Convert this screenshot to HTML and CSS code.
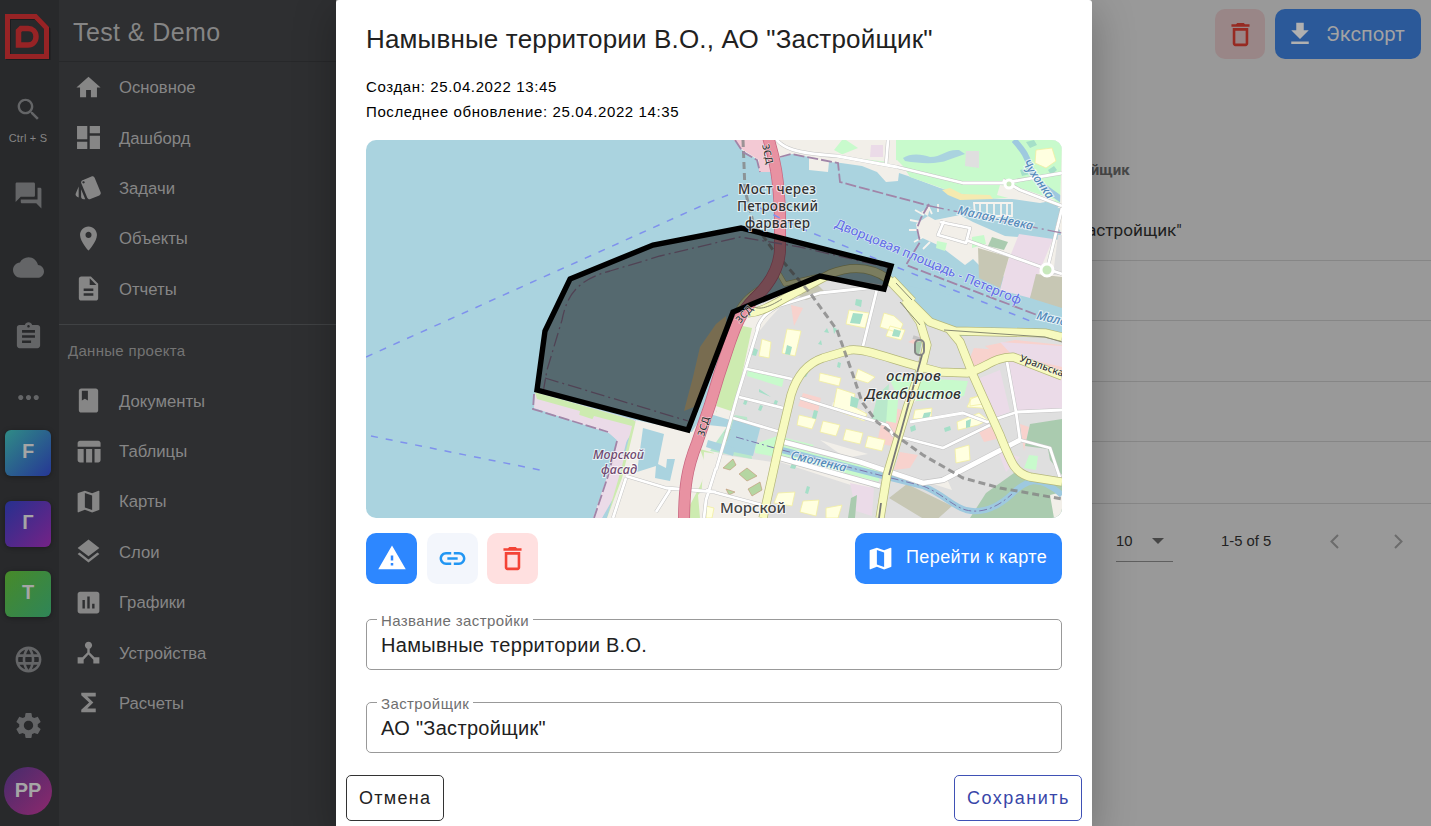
FILE: index.html
```html
<!DOCTYPE html>
<html lang="ru">
<head>
<meta charset="utf-8">
<title>Test &amp; Demo</title>
<link rel="stylesheet" href="styles.css">
</head>
<body>
<div class="app">
  <nav class="rail">
    <div class="cell cell-logo"><svg width="46" height="46" viewBox="0 0 46 46"><path class="logo-shadow" d="M3.500 3.500H31L43 15.500V43.500H3.500Z"/><path class="logo-frame" d="M2.500 2.500H30.500L41.500 14V42.500H2.500Z"/><path class="logo-d" d="M16 14.500H23C27.500 14.500 31 17.500 31 22.500S27.500 31 23 31H13.500V17Z"/></svg></div>
    <div class="cell cell-search"><svg class="ic31" viewBox="0 0 24 24"><path d="M15.500 14h-.79l-.28-.27C15.410 12.590 16 11.110 16 9.500 16 5.910 13.090 3 9.500 3S3 5.910 3 9.500 5.910 16 9.500 16c1.610 0 3.090-.59 4.230-1.570l.27.28v.79l5 4.990L20.490 19l-4.990-5zm-6 0C7.010 14 5 11.990 5 9.500S7.010 5 9.500 5 14 7.010 14 9.500 11.990 14 9.500 14z"/></svg><span class="hint">Ctrl + S</span></div>
    <div class="cell cell-chat"><svg class="ic31" viewBox="0 0 24 24"><path d="M21 6h-2v9H6v2c0 .55.45 1 1 1h11l4 4V7c0-.55-.45-1-1-1zm-4 6V3c0-.55-.45-1-1-1H3c-.55 0-1 .45-1 1v14l4-4h10c.55 0 1-.45 1-1z"/></svg></div>
    <div class="cell cell-cloud"><svg class="ic31" viewBox="0 0 24 24"><path d="M19.350 10.040C18.670 6.590 15.640 4 12 4 9.110 4 6.600 5.640 5.350 8.040 2.340 8.360 0 10.910 0 14c0 3.310 2.690 6 6 6h13c2.760 0 5-2.240 5-5 0-2.640-2.050-4.780-4.650-4.960z"/></svg></div>
    <div class="cell cell-clip"><svg class="ic31" viewBox="0 0 24 24"><path d="M19 3h-4.180C14.400 1.840 13.300 1 12 1c-1.300 0-2.400.84-2.820 2H5c-1.100 0-2 .9-2 2v14c0 1.100.9 2 2 2h14c1.100 0 2-.9 2-2V5c0-1.100-.9-2-2-2zm-7 0c.55 0 1 .45 1 1s-.45 1-1 1-1-.45-1-1 .45-1 1-1zm2 14H7v-2h7v2zm3-4H7v-2h10v2zm0-4H7V7h10v2z"/></svg></div>
    <div class="cell cell-dots"><svg class="ic31" viewBox="0 0 24 24"><path d="M6 10c-1.100 0-2 .9-2 2s.9 2 2 2 2-.9 2-2-.9-2-2-2zm12 0c-1.100 0-2 .9-2 2s.9 2 2 2 2-.9 2-2-.9-2-2-2zm-6 0c-1.100 0-2 .9-2 2s.9 2 2 2 2-.9 2-2-.9-2-2-2z"/></svg></div>
    <div class="cell cell-f"><span class="tile tile-f">F</span></div>
    <div class="cell cell-g"><span class="tile tile-g">Г</span></div>
    <div class="cell cell-t"><span class="tile tile-t">T</span></div>
    <div class="cell cell-globe"><svg class="ic31" viewBox="0 0 24 24"><path d="M11.990 2C6.470 2 2 6.480 2 12s4.470 10 9.990 10C17.520 22 22 17.520 22 12S17.520 2 11.990 2zm6.930 6h-2.950c-.32-1.250-.78-2.450-1.380-3.560 1.840.63 3.370 1.910 4.330 3.560zM12 4.040c.83 1.200 1.480 2.530 1.910 3.960h-3.820c.43-1.430 1.080-2.760 1.910-3.960zM4.260 14C4.100 13.360 4 12.690 4 12s.1-1.360.26-2h3.380c-.08.66-.14 1.320-.14 2 0 .68.06 1.340.14 2H4.260zm.82 2h2.950c.32 1.250.78 2.450 1.380 3.560-1.840-.63-3.370-1.900-4.330-3.560zm2.950-8H5.080c.96-1.660 2.490-2.930 4.330-3.560C8.810 5.550 8.350 6.750 8.030 8zM12 19.960c-.83-1.200-1.480-2.530-1.910-3.960h3.820c-.43 1.430-1.080 2.760-1.910 3.960zM14.340 14H9.660c-.09-.66-.16-1.320-.16-2 0-.68.07-1.350.16-2h4.680c.09.65.16 1.320.16 2 0 .68-.07 1.340-.16 2zm.25 5.560c.6-1.110 1.060-2.310 1.380-3.560h2.950c-.96 1.650-2.490 2.930-4.330 3.560zM16.360 14c.08-.66.14-1.320.14-2 0-.68-.06-1.340-.14-2h3.380c.16.64.26 1.310.26 2s-.1 1.360-.26 2h-3.380z"/></svg></div>
    <div class="cell cell-gear"><svg class="ic31" viewBox="0 0 24 24"><path d="M19.140 12.940c.04-.3.06-.61.06-.94 0-.32-.02-.64-.07-.94l2.030-1.580c.18-.14.23-.41.12-.61l-1.920-3.320c-.12-.22-.37-.29-.59-.22l-2.390.96c-.5-.38-1.030-.7-1.620-.94l-.36-2.540c-.04-.24-.24-.41-.48-.41h-3.840c-.24 0-.43.17-.47.41l-.36 2.540c-.59.24-1.130.57-1.620.94l-2.390-.96c-.22-.08-.47 0-.59.22L2.740 8.870c-.12.21-.08.47.12.61l2.030 1.580c-.05.3-.09.63-.09.94s.02.64.07.94l-2.030 1.580c-.18.14-.23.41-.12.61l1.920 3.320c.12.22.37.29.59.22l2.390-.96c.5.38 1.030.7 1.620.94l.36 2.540c.05.24.24.41.48.41h3.840c.24 0 .44-.17.47-.41l.36-2.540c.59-.24 1.130-.56 1.620-.94l2.390.96c.22.08.47 0 .59-.22l1.920-3.320c.12-.22.07-.47-.12-.61l-2.010-1.580zM12 15.600c-1.980 0-3.600-1.620-3.600-3.600s1.620-3.600 3.600-3.600 3.600 1.620 3.600 3.600-1.620 3.600-3.600 3.600z"/></svg></div>
    <div class="cell cell-avatar"><span class="avatar">PP</span></div>
  </nav>

  <aside class="side">
    <h1 class="side-title">Test &amp; Demo</h1>
    <ul class="menu">
      <li><svg viewBox="0 0 24 24"><path d="M10 20v-6h4v6h5v-8h3L12 3 2 12h3v8z"/></svg><span>Основное</span></li>
      <li><svg viewBox="0 0 24 24"><path d="M2.500 13.500h8.500v-11H2.500v11zm0 8h8.500v-6H2.500v6zm10.500 0h8.500v-11H13v11zm0-19v6h8.500v-6H13z"/></svg><span>Дашборд</span></li>
      <li><svg viewBox="0 0 24 24"><path d="M2.530 19.650l1.340.56v-9.030l-2.430 5.860c-.41 1.020.08 2.190 1.090 2.610zm19.500-3.700L17.070 3.980c-.31-.75-1.040-1.210-1.810-1.230-.26 0-.53.04-.79.15L7.100 5.950c-.75.31-1.210 1.030-1.230 1.800-.01.27.04.54.15.8l4.960 11.970c.31.76 1.050 1.220 1.830 1.230.26 0 .52-.05.77-.15l7.360-3.050c1.020-.42 1.510-1.590 1.090-2.600zM7.880 8.750c-.55 0-1-.45-1-1s.45-1 1-1 1 .45 1 1-.45 1-1 1zm-2 11c0 1.100.9 2 2 2h1.450l-3.450-8.340v6.340z"/></svg><span>Задачи</span></li>
      <li><svg viewBox="0 0 24 24"><path d="M12 2C8.130 2 5 5.130 5 9c0 5.250 7 13 7 13s7-7.750 7-13c0-3.870-3.130-7-7-7zm0 9.500c-1.380 0-2.500-1.120-2.500-2.500s1.120-2.500 2.500-2.500 2.500 1.120 2.500 2.500-1.120 2.500-2.500 2.500z"/></svg><span>Объекты</span></li>
      <li><svg viewBox="0 0 24 24"><path d="M14 2H6c-1.100 0-2 .9-2 2v16c0 1.100.9 2 2 2h12c1.100 0 2-.9 2-2V8l-6-6zm2 16H8v-2h8v2zm0-4H8v-2h8v2zm-3-5V3.500L18.500 9H13z"/></svg><span>Отчеты</span></li>
    </ul>
    <div class="group">Данные проекта</div>
    <ul class="menu">
      <li><svg viewBox="0 0 24 24"><path d="M18 2H6c-1.100 0-2 .9-2 2v16c0 1.100.9 2 2 2h12c1.100 0 2-.9 2-2V4c0-1.100-.9-2-2-2zM6.500 4h5v8l-2.500-1.500L6.500 12V4z"/></svg><span>Документы</span></li>
      <li><svg viewBox="0 0 24 24"><path d="M10 10.020h5V21h-5V10.020zM17 21h3c1.100 0 2-.9 2-2v-9h-5v11zm3-18H5c-1.100 0-2 .9-2 2v3h19V5c0-1.100-.9-2-2-2zM3 19c0 1.100.9 2 2 2h3V10H3v9z"/></svg><span>Таблицы</span></li>
      <li><svg viewBox="0 0 24 24"><path d="M20.500 3l-.16.03L15 5.100 9 3 3.360 4.900c-.21.07-.36.25-.36.48V20.500c0 .28.22.5.5.5l.16-.03L9 18.900l6 2.100 5.640-1.900c.21-.07.36-.25.36-.48V3.500c0-.28-.22-.5-.5-.5zM15 19l-6-2.110V5l6 2.110V19z"/></svg><span>Карты</span></li>
      <li><svg viewBox="0 0 24 24"><path d="M11.990 18.540l-7.370-5.730L3 14.070l9 7 9-7-1.630-1.270-7.380 5.740zM12 16l7.360-5.730L21 9l-9-7-9 7 1.630 1.270L12 16z"/></svg><span>Слои</span></li>
      <li><svg viewBox="0 0 24 24"><path d="M19 3H5c-1.100 0-2 .9-2 2v14c0 1.100.9 2 2 2h14c1.100 0 2-.9 2-2V5c0-1.100-.9-2-2-2zM9 17H7v-7h2v7zm4 0h-2V7h2v10zm4 0h-2v-4h2v4z"/></svg><span>Графики</span></li>
      <li><svg viewBox="0 0 24 24"><path d="M17 16l-4-4V8.820C14.160 8.400 15 7.300 15 6c0-1.660-1.340-3-3-3S9 4.340 9 6c0 1.300.84 2.400 2 2.820V12l-4 4H3v5h5v-3.050l4-4.200 4 4.200V21h5v-5h-4z"/></svg><span>Устройства</span></li>
      <li><svg viewBox="0 0 24 24"><path d="M18 4H6v2l6.500 6L6 18v2h12v-3h-7l5-5-5-5h7z"/></svg><span>Расчеты</span></li>
    </ul>
  </aside>

  <main class="main">
    <div class="toolbar">
      <button class="btn-del dim"><svg viewBox="0 0 24 24"><path d="M6 19c0 1.100.9 2 2 2h8c1.100 0 2-.9 2-2V7H6v12zM8 9h8v10H8V9zm7.500-5l-1-1h-5l-1 1H5v2h14V4z"/></svg></button>
      <button class="btn-export"><svg viewBox="0 0 24 24"><path d="M19 9h-4V3H9v6H5l7 7 7-7zM5 18v2h14v-2H5z"/></svg><span>Экспорт</span></button>
    </div>
    <div class="table">
      <div class="thead"><span>Застройщик</span></div>
      <div class="trow first"><span>АО "Застройщик"</span></div>
      <div class="trow"></div><div class="trow"></div><div class="trow"></div><div class="trow last"></div>
    </div>
    <div class="pager">
      <div class="select"><span>10</span><svg viewBox="0 0 12 6"><path d="M0 0h12L6 6z"/></svg></div>
      <span class="range">1-5 of 5</span>
      <svg class="chev" viewBox="0 0 9 15"><path d="M8 1L1.500 7.500 8 14"/></svg>
      <svg class="chev" viewBox="0 0 9 15"><path d="M1 1l6.500 6.500L1 14"/></svg>
    </div>
  </main>

  <section class="dialog">
    <h2 class="title">Намывные территории В.О., АО "Застройщик"</h2>
    <p class="meta meta-a">Создан: 25.04.2022 13:45</p>
    <p class="meta meta-b">Последнее обновление: 25.04.2022 14:35</p>

    <svg class="map" viewBox="366 140 696 378">
      <rect class="water" x="366" y="140" width="696" height="378"/>
      <!-- northern shore -->
      <path class="land" d="M734 140H1062V207L1045 201 1020 199 1000 199 975 197 940 188 908 176 899 173 898 181 886 182 877 172 862 166 841 163 829 162 828 172 809 170 809 157 792 154 780 158 776 172 760 172 758 160 742 150Z"/>
      <path class="pink" d="M734 140H774L778 156 776 172H759V160L743 150Z"/>
      <path class="park" d="M842 140H1062V207L1030 197 985 199 950 191 910 177 903 166 897 160 886 163 845 156 834 150Z"/>
      <path class="land" d="M846 140H896V163L838 156 858 148Z"/>
      <path class="lav" d="M871 145H883V157H870Z"/>
      <path class="sand" d="M942 190L950 188 962 194 990 195 993 199 960 200 948 195Z"/>
      <path class="land" d="M1000 185L1020 188 1056 200 1040 203 1012 199 997 195Z"/>
      <path class="grey" d="M966 151H979V168L965 166Z"/>
      <path class="water" d="M903 158C910 153 922 154 930 157 942 157 946 149 959 150L965 154 948 160C939 164 922 164 905 161Z"/>
      <path class="yel" d="M1036 150L1052 148 1056 161 1046 168 1035 163Z"/>
      <path class="mint2" d="M1048 170l6-4 3 4-6 5zM1020 170l8-2 2 6-8 2zM1026 142l8-2 3 5-7 3z"/>
      <path class="river" d="M1014 140C1023 150 1028 157 1031 170L1040 184 1062 200"/>
      <!-- marina island -->
      <path class="land" d="M921 212L930 207 928 216 916 224 918 236 940 246 965 265 973 259 980 266 1000 275 1030 288 1062 298V140L1060 205 1046 222 1060 230 1062 240 1005 236 973 222 960 215 935 220Z"/>
      <path class="water" d="M1020 209L1061 208 1053 236 1010 232 975 220 972 210Z"/>
      <path class="pier" d="M974 203H1012V216H975ZM980 203V214M987 203V214M994 203V215M1001 203V216M1007 203V215M924 215l-9-5M920 222l-10-2M919 230h-10M923 237l-9 5M930 242l-7 7M932 214l-4-8M938 212v-8"/>
      <path class="lav" d="M1019 234L1053 239 1040 270 1030 298 1000 290 1007 264Z"/>
      <path class="brown" d="M978 248L1009 257 1000 288 979 278Z"/>
      <path class="brown" d="M1036 274L1062 277V308L1030 298Z"/>
      <path class="park" d="M972 237l12-2 2 9-14 4zM937 241l10 2-2 8-9-3z"/>
      <path class="wood" d="M992 237l16 5-4 8-16-4z"/>
      <path class="grey" d="M1058 235h4v40h-9z"/>
      <!-- reclaimed strip and harbour -->
      <path class="lav" d="M535 392L635 420 638 423 621 450 629 471 602 518H593L609 471 617 440 609 433 534 408Z"/>
      <path class="pgreen" d="M535 392L633 420 639 424 628 470 612 518H607L621 470 632 426 594 416 592 420 579 416 580 411 537 399Z"/>
      <path class="lav" d="M540 402L592 419 630 427 620 468 602 518H594L609 471 617 440 609 433 536 408Z"/>
      <path class="land" d="M636 420L692 432 714 397 722 372 737 318 757 322V518H607L622 478Z"/>
      <path class="water" d="M643 428L664 434 658 464 666 468 667 459 675 459 670 481 655 478 656 466 637 472Z"/>
      <path class="pgreen" d="M700 449L714 453 700 486 690 505 690 518H700L698 495 711 480ZM741 322L758 322 735 418 716 412Z"/>
      <!-- main island -->
      <path class="grey" d="M733 316L820 276 885 285 905 292 925 325 960 331 1062 336V518H700L713 478 727 430 740 360Z"/>
      <path class="land" d="M733 318L800 286 770 318 752 340 737 400 730 430 723 440 715 405ZM770 448L862 470 877 485 866 490 780 462ZM704 452L730 456 772 462 760 518H700Z"/>
      <path class="pgreen" d="M752 328L734 412 716 406 738 325Z"/>
      <path class="water" d="M1062 336H960L925 322 910 300 900 284 1062 320Z"/>
      <path class="pk" d="M974 348L1000 350 998 355 975 370 968 362ZM1015 340L1062 345V375L1000 357 985 346Z"/>
      <path class="lav" d="M1007 358L1062 373V410L1017 410ZM1000 342L1062 346 1062 367 1012 355ZM975 380L1000 370 1010 412 990 419ZM998 451L1020 457 1006 472Z"/>
      <path class="pk" d="M885 406l18 4-7 37-19-4zM917 345l5-10-14 7zM803 393l18 5-3 14-20-6zM978 430l17-4 6 12-17 4zM900 452l18 3-8 13-16 2zM1020 424l9 3-5 24zM791 305l12 3-9 18z"/>
      <path class="park" d="M888 376L968 381 964 396 908 402 896 393ZM748 368l36 10-2 9-35-11zM782 437l32 8-8 7-28-8zM755 444l22-8-1 21-21-4zM888 394l11-5-3 34-20-4zM1029 455l9 1-2 14-12-2z"/>
      <path class="mint" d="M878 394l11-10-3 40-15-3zM735 415l12 2 5 42-42-8z"/>
      <path class="wood" d="M970 518L986 493 1014 473 1035 481 1062 483V518ZM1025 446L1030 424 1062 419V475L1050 460 1048 449Z"/>
      <path class="brown" d="M889 498l18-14 45 22-20 18zM794 293l22-10 10 10-20 7z"/>
      <path class="land" d="M820 440l48 14-22 4zM900 393l18 5-10 12zM833 402l32 9-2 7-32-9zM930 483l17-4 5 11zM1050 495l12-3v26h-8z"/>
      <path class="lav" d="M850 483l24 5-2 28-16-5z"/>
      <path class="scrub" d="M723 468l10-9 3 6-6 5zM739 474l8-6 10 8-10 5zM748 489l12-7 2 8-10 6zM726 489l9 3-6 3zM725 432l9-4 2 10-9 3z"/>
      <!-- buildings -->
      <path class="yel" d="M787 329l14 2-6 25-13-3zM762 339l9 3-2 16-10-2zM849 310l20 3-4 15-19-4zM884 313l10 3 9 8-4 9-19-6zM890 326l15 4-4 10-15-4zM820 373l21 5-2 8-20-5zM858 369l17 8-7 6-13-4zM837 388l18 6-3 12 15 8-3 7-31-12zM799 415l17 4-4 10-15-4zM823 421l17 4-4 11-16-4zM846 429l17 4-3 11-17-4zM868 436l17 4-3 11-17-4zM915 410l17-2-1 10-18 1zM971 399l13-6 3 10 7 9-13-4-14-1zM970 398l11-2 2 8-13 2zM957 422l22-9 9 7-10 5-20 5zM955 449l14-4 1 15-14 3zM778 493l17-1-3 14-18-3zM803 501l16-1-3 16-16-4zM826 508l16-3-4 13h-12zM706 506l8 2-2 10h-6z"/>
      <path class="mint2" d="M787 345l5 2-2 8-5-1zM853 313l10 1-3 10-10-1zM856 299l6 1-1 7-6-2zM894 329l7 2-2 6-7-1zM851 396l8 3-2 9-7-2zM814 410l4 1-2 8-4-1zM924 413l7-1-2 6-7 1zM966 421l5-2-1 8-4 1zM807 486l3 1-2 7-3-1zM759 389l12 8-12-5zM833 327l4 2-3 5zM754 348l4 2-2 6-4-1zM792 463l5 1-2 5-5-1zM745 399l3 1-2 5-3-1zM760 405l3 1-2 5-3-1zM824 332l3-4 2 5zM869 467l3-1-1 5zM804 372l4 1-2 4-4-1zM818 344l3-4 1 5zM910 427l5-2 1 5-5 2zM944 428l6-2 1 4-6 2zM838 362l3 1-1 5-3-1zM775 400l3 1-2 5-3-1z"/>
      <path class="wood" d="M851 498l6-3-2 23h-7zM916 342l6-1-3 14-5-2z"/>
      <!-- Smolenka -->
      <path class="water" d="M734 418L761 425 753 456 724 450Z"/>
      <path class="water" d="M710 414l20 6-3 7-19-2zM708 440l27 8-2 8-27-9z"/>
      <path class="river-g" d="M780 451L880 476"/>
      <path class="river" d="M778 449L883 476 923 486C945 495 950 505 966 510 982 514 998 507 1012 494 1025 481 1038 473 1062 495"/>
      <path class="river-dash" d="M736 437L778 449 883 476 923 486C945 495 950 505 966 510 982 514 998 507 1012 494"/>
      <!-- white streets -->
      <g class="case">
        <path d="M775 138C783 148 793 153 837 156L897 167 963 183 1003 183 1062 173M1003 180L1020 190 1062 206M1062 208L1047 270M888 140L886 165M940 222L970 228 966 243 938 235 944 221M966 240L1044 268 1062 274"/>
        <path d="M757 329C760 318 768 312 778 306L820 293 877 287M877 289L863 346M759 325L737 397 730 422 716 470M739 397L783 408M747 369L792 379M800 398L887 425 893 435 943 448 990 425M910 422L963 413 987 422 1017 412 1062 410M1007 362L1016 412 1020 440"/>
        <path class="wide" d="M784 442L860 462 923 483 943 480 1020 440M780 458L880 486"/>
        <path d="M1020 440L1050 448 1060 478M706 490L762 505M733 418L780 432M626 476L666 488 716 492M626 478L613 518M670 490L656 512M716 468L706 500 704 518"/>
        <path d="M913 337L925 341 925 350"/>
      </g>
      <g class="street">
        <path d="M775 138C783 148 793 153 837 156L897 167 963 183 1003 183 1062 173M1003 180L1020 190 1062 206M1062 208L1047 270M888 140L886 165M940 222L970 228 966 243 938 235 944 221M966 240L1044 268 1062 274"/>
        <path d="M757 329C760 318 768 312 778 306L820 293 877 287M877 289L863 346M759 325L737 397 730 422 716 470M739 397L783 408M747 369L792 379M800 398L887 425 893 435 943 448 990 425M910 422L963 413 987 422 1017 412 1062 410M1007 362L1016 412 1020 440"/>
        <path class="wide" d="M784 442L860 462 923 483 943 480 1020 440M780 458L880 486"/>
        <path d="M1020 440L1050 448 1060 478M706 490L762 505M733 418L780 432M626 476L666 488 716 492M626 478L613 518M670 490L656 512M716 468L706 500 704 518"/>
      </g>
      <circle class="round" cx="1047" cy="270" r="6"/><circle class="round" cx="1009" cy="184" r="4"/>
      <!-- main roads -->
      <g class="ycase">
        <path d="M763 518L778 450 791 395C797 375 808 363 823 358L850 350C862 348 885 357 917 366L940 372 967 373C985 369 993 357 1013 357L1062 376"/>
        <path d="M905 300L920 322 927 345 923 362 907 408 887 475 880 518M950 330L960 342 973 375 1000 435C1012 465 1015 473 1030 477L1062 482"/>
        <path d="M748 313C765 312 780 300 800 290L830 274C850 266 870 266 888 279L908 300 930 322 955 331 1045 333 1062 337"/>
        <path class="thin" d="M737 312C746 290 770 287 778 272L785 284 820 276M893 278L914 300"/>
      </g>
      <g class="yroad">
        <path d="M763 518L778 450 791 395C797 375 808 363 823 358L850 350C862 348 885 357 917 366L940 372 967 373C985 369 993 357 1013 357L1062 376"/>
        <path d="M905 300L920 322 927 345 923 362 907 408 887 475 880 518M950 330L960 342 973 375 1000 435C1012 465 1015 473 1030 477L1062 482"/>
        <path d="M748 313C765 312 780 300 800 290L830 274C850 266 870 266 888 279L908 300 930 322 955 331 1045 333 1062 337"/>
        <path class="thin" d="M737 312C746 290 770 287 778 272L785 284 820 276M893 278L914 300"/>
      </g>
      <path class="lane" d="M900 302L920 325M896 283L912 300M944 330L1045 337 1062 342M752 305C757 311 768 308 782 299"/>
      <rect class="tramloop" x="915" y="340" width="9" height="15" rx="4"/>
      <path class="tram" d="M922 355L889 475M881 503L879 518"/>
      <path class="rail-line" d="M743 140L745 190 753 222 773 250 810 293 837 330 853 375 862 402 877 422 923 455 963 478 1000 488 1062 499"/>
      <!-- sand bar and motorway -->
      <path class="dune" d="M716 324L726 316 727 332 699 405 684 411 693 377 700 347Z"/>
      <path class="zcase" d="M767 134C775 158 779 180 780 215V250C779 270 768 286 754 299 739 314 735 328 729 345L719 375 710 405 697 443C687 468 684 487 684 524"/>
      <path class="zsd" d="M767 134C775 158 779 180 780 215V250C779 270 768 286 754 299 739 314 735 328 729 345L719 375 710 405 697 443C687 468 684 487 684 524"/>
      <path class="border" d="M534 394L533 409 608 432M617 441L608 476 594 518M735 140L743 152 757 160 760 172M780 157L791 154 838 163 840 182 930 206M929 204L921 218 917 228 920 242 906 265 1037 315"/>
      <path class="border2" d="M930 206L1062 233"/>
      <path class="border3" d="M543 393L547 370 562 320C567 295 577 280 610 271L660 256 740 237 800 247 890 268M545 378L688 421"/>
      <path class="ferry" d="M366 357L710 202 728 195M371 436L540 470M760 208L800 228 1035 323"/>
      <path class="plot" d="M570 279L653 245 741 228 891 266 884 289 820 276 733 312 688 430 537 390 545 331Z"/>
      <g class="lbl">
        <text x="738" y="194" textLength="78">Мост через</text>
        <text x="737" y="211" textLength="81">Петровский</text>
        <text x="745" y="228" textLength="65">фарватер</text>
        <text class="it" x="886" y="381" textLength="55">остров</text>
        <text class="it" x="865" y="399" textLength="96">Декабристов</text>
        <text class="town" x="720" y="513" textLength="66">Морской</text>
        <text class="purple" x="593" y="459" textLength="51">Морской</text>
        <text class="purple" x="601" y="474" textLength="36">фасад</text>
        <text class="wtr" transform="translate(957 214) rotate(12)" textLength="77">Малая-Невка</text>
        <text class="wtr" transform="translate(1036 319) rotate(13)">Мало</text>
        <text class="wtr" transform="translate(790 459) rotate(13)" textLength="57">Смоленка</text>
        <text class="wtr" transform="translate(1022 163) rotate(55)" textLength="45">Чухонка</text>
        <text class="fer" transform="translate(834 227) rotate(22.800)" textLength="201">Дворцовая площадь - Петергоф</text>
        <text class="road" transform="translate(1019 361) rotate(20)" textLength="46">Уральска</text>
        <text class="road" transform="translate(762 145) rotate(77)" textLength="20">ЗСД</text>
        <text class="road" transform="translate(740 324) rotate(-48)" textLength="20">ЗСД</text>
        <text class="road" transform="translate(704 437) rotate(-74)" textLength="20">ЗСД</text>
      </g>
    </svg>

    <div class="actions">
      <button class="btn-warn"><svg viewBox="0 0 24 24"><path d="M1 21h22L12 2 1 21zm12-3h-2v-2h2v2zm0-4h-2v-4h2v4z"/></svg></button>
      <button class="btn-link"><svg viewBox="0 0 24 24"><path d="M3.900 12c0-1.710 1.390-3.100 3.100-3.100h4V7H7c-2.760 0-5 2.240-5 5s2.240 5 5 5h4v-1.900H7c-1.710 0-3.100-1.390-3.100-3.100zM8 13h8v-2H8v2zm9-6h-4v1.900h4c1.710 0 3.100 1.390 3.100 3.100s-1.390 3.100-3.100 3.100h-4V17h4c2.760 0 5-2.240 5-5s-2.240-5-5-5z"/></svg></button>
      <button class="btn-del"><svg viewBox="0 0 24 24"><path d="M6 19c0 1.100.9 2 2 2h8c1.100 0 2-.9 2-2V7H6v12zM8 9h8v10H8V9zm7.500-5l-1-1h-5l-1 1H5v2h14V4z"/></svg></button>
      <button class="btn-map"><svg viewBox="0 0 24 24"><path d="M20.500 3l-.16.03L15 5.100 9 3 3.360 4.900c-.21.07-.36.25-.36.48V20.500c0 .28.22.5.5.5l.16-.03L9 18.900l6 2.100 5.640-1.900c.21-.07.36-.25.36-.48V3.500c0-.28-.22-.5-.5-.5zM15 19l-6-2.110V5l6 2.110V19z"/></svg><span>Перейти к карте</span></button>
    </div>

    <fieldset class="field"><legend>Название застройки</legend><span>Намывные территории В.О.</span></fieldset>
    <fieldset class="field second"><legend>Застройщик</legend><span>АО "Застройщик"</span></fieldset>

    <footer class="foot">
      <button class="btn-out">Отмена</button>
      <button class="btn-out save">Сохранить</button>
    </footer>
  </section>
</div>
</body>
</html>
```
FILE: styles.css
```css
* { box-sizing: border-box; }
body { margin: 0; font-family: "Liberation Sans", Arial, sans-serif; background: #999; overflow: hidden; }
button { border: 0; padding: 0; margin: 0; font: inherit; background: none; display: flex; align-items: center; }
.app { position: relative; display: flex; width: 1431px; height: 826px; overflow: hidden; }

.rail { width: 59px; flex: none; background: #28292b; padding-right: 3px; display: flex; flex-direction: column; }
.cell { display: flex; align-items: center; justify-content: center; flex: none; }
.ic31 { width: 31px; height: 31px; fill: #646567; }
.cell-logo { height: 73px; }
.logo-frame { fill: none; stroke: #972325; stroke-width: 5; }
.logo-shadow { fill: none; stroke: #1c1c1e; stroke-width: 5; }
.logo-d { fill: none; stroke: #972325; stroke-width: 5.500; }
.cell-search { height: 57px; margin-top: 20px; flex-direction: column; justify-content: flex-start; padding-top: 2px; }
.hint { font-size: 11px; line-height: 24px; color: #868686; white-space: nowrap; letter-spacing: .2px; margin-top: 2px; }
.cell-chat { height: 90px; }
.cell-cloud { height: 54px; }
.cell-clip { height: 84px; }
.cell-dots { height: 38px; }
.cell-f { height: 73px; }
.cell-g { height: 69px; }
.cell-t { height: 72px; }
.cell-globe { height: 58px; }
.cell-gear { height: 74px; }
.cell-avatar { height: 57px; }
.tile { width: 46px; height: 46px; border-radius: 6px; display: flex; align-items: center; justify-content: center; padding-bottom: 3px; font-weight: 700; font-size: 20px; color: #a5a5a5; box-shadow: 0 1px 5px rgba(0,0,0,.35); }
.tile-f { background: linear-gradient(135deg, #2f8b86, #263795); }
.tile-g { background: linear-gradient(135deg, #26308f, #752286); }
.tile-t { background: linear-gradient(135deg, #478a29, #2f8558); }
.avatar { width: 48px; height: 48px; border-radius: 50%; background: linear-gradient(135deg, #452c6c, #8d286d); display: flex; align-items: center; justify-content: center; font-weight: 700; font-size: 20px; color: #a5a5a5; }

.side { width: 277px; flex: none; background: #2e2f31; }
.side-title { margin: 0; height: 62px; padding: 3px 0 0 14px; line-height: 58px; font-size: 25px; font-weight: 400; color: #858585; letter-spacing: .4px; border-bottom: 1px solid #27282a; }
.menu { list-style: none; margin: 0; padding: 0 0 0 15px; }
.menu li { height: 50.400px; display: flex; align-items: center; gap: 16px; color: #868686; font-size: 16.700px; }
.menu span { padding-top: 2px; }
.menu svg { width: 29px; height: 29px; fill: #868686; flex: none; }
.group { height: 51.500px; margin-top: 10px; border-top: 1px solid #404244; padding: 0 0 0 9px; line-height: 52px; font-size: 15px; color: #747474; letter-spacing: .3px; }

.main { flex: 1; min-width: 0; background: #999; display: flex; flex-direction: column; }
.toolbar { display: flex; justify-content: flex-end; gap: 10px; padding: 9px 10px 0 0; }
.btn-del { width: 51px; height: 51px; border-radius: 10px; background: #ffe0e0; justify-content: center; }
.btn-del svg { width: 31px; height: 31px; fill: #f44336; }
.btn-del.dim { width: 50px; height: 50px; background: #998687; }
.btn-del.dim svg { fill: #972a22; }
.btn-export { width: 146px; height: 50px; border-radius: 10px; background: #2b5999; color: #a3a3a3; padding-left: 10px; gap: 11px; font-family: Roboto, sans-serif; font-size: 20.300px; }
.btn-export svg { width: 30px; height: 30px; fill: #b0b0b0; }
.table { margin-top: 81px; font-family: Roboto, sans-serif; }
.thead, .trow { display: flex; align-items: center; }
.thead { height: 60px; padding-left: 705px; font-size: 15px; font-weight: 700; color: #494949; }
.trow { height: 60.500px; border-bottom: 1px solid #868686; }
.trow.last { height: 61.500px; }
.trow.first { padding-left: 708px; font-size: 17.200px; color: #1f1f1f; }
.thead, .trow.first { white-space: nowrap; }
.pager { display: flex; align-items: flex-start; padding: 17px 0 0 780px; font-size: 14.800px; color: #222; }
.select { width: 57px; height: 41px; display: flex; align-items: center; justify-content: space-between; padding-right: 9px; border-bottom: 1px solid #5f5f5f; flex: none; }
.select svg { width: 12px; height: 6px; fill: #464646; }
.range { line-height: 41px; margin-left: 48px; width: 109px; white-space: nowrap; flex: none; }
.chev { width: 9px; height: 15px; margin-top: 13px; margin-right: 55px; fill: none; stroke: #6c6c6c; stroke-width: 2; flex: none; }
.chev:last-child { margin-right: 0; }

.dialog { position: absolute; left: 336px; top: 0; width: 756px; height: 826px; background: #fff; padding: 0 30px; display: flex; flex-direction: column; border-radius: 3px 3px 0 0; box-shadow: 0 12px 40px 2px rgba(0,0,0,.26); }
.title { margin: 0; height: 79px; line-height: 79px; font-weight: 400; font-size: 26px; letter-spacing: .17px; color: #212121; white-space: nowrap; }
.meta { margin: 0; font-size: 15px; color: #000; line-height: 25.200px; height: 25.200px; letter-spacing: .62px; }
.meta-a { margin-top: -5px; }
.map { width: 696px; height: 378px; flex: none; border-radius: 10px; margin-top: 15.600px; display: block; }
.actions { display: flex; gap: 9.500px; margin-top: 15px; height: 51px; flex: none; }
.btn-warn, .btn-link { width: 51px; height: 51px; border-radius: 10px; justify-content: center; }
.btn-warn { background: #2d87ff; }
.btn-link { background: #f3f6fc; }
.btn-warn svg { width: 30px; height: 30px; fill: #fff; }
.btn-link svg { width: 31px; height: 31px; fill: #2196f3; }
.btn-map { width: 207px; height: 51px; margin-left: auto; border-radius: 10px; background: #2d87ff; color: #fff; padding-left: 11px; gap: 11px; font-size: 18px; letter-spacing: .4px; white-space: nowrap; }
.btn-map svg { width: 29px; height: 29px; fill: #fff; flex: none; }
.btn-map span { padding-bottom: 1px; }
.field { margin: 27px 0 0; height: 59px; border: 1px solid #999; border-radius: 5px; padding: 0 10px; min-width: 0; flex: none; color: #212121; font-size: 20px; }
.field legend { padding: 1px 4px 0; font-size: 15px; line-height: 17px; height: 18px; color: #6f6f6f; letter-spacing: .4px; }
.field span { display: block; padding-left: 4px; line-height: 32px; letter-spacing: .3px; white-space: nowrap; }
.field.second { margin-top: 24px; }
.foot { display: flex; justify-content: space-between; margin: 22.500px -20px 0; }
.btn-out { width: 98px; height: 46px; border: 1px solid #333; border-radius: 5px; padding-left: 12px; font-size: 18px; letter-spacing: 1.300px; color: #222; white-space: nowrap; }
.btn-out.save { width: 128px; border-color: #3f51b5; color: #3846a8; letter-spacing: 1.500px; }

.water { fill: #aad3df; }
.land { fill: #f2efe9; }
.grey { fill: #dfdfdf; }
.park { fill: #c8facc; }
.pgreen { fill: #cdebb0; }
.lav { fill: #ebdbe8; }
.pink { fill: #f3c9d4; }
.pk { fill: #f8d2cd; }
.sand { fill: #f5eab0; }
.yel { fill: #ffffe0; stroke: #f2ef9f; stroke-width: .8; }
.mint { fill: #b9e8cb; }
.mint2 { fill: #a5dfc8; }
.brown { fill: #c7c7b4; }
.wood { fill: #aacbaf; }
.scrub { fill: #b5d6a2; stroke: #c39474; stroke-width: .6; }
.dune { fill: #f0d9a0; }
.river { fill: none; stroke: #9ec9df; stroke-width: 6; }
.river-g { fill: none; stroke: #c8facc; stroke-width: 12; }
.river-dash { fill: none; stroke: #7c78ad; stroke-width: 1; stroke-dasharray: 8 3 2 3; }
.pier { fill: none; stroke: #f6f3ee; stroke-width: 1.800; }
.case, .street, .ycase, .yroad { fill: none; stroke-linejoin: round; }
.case { stroke: #c4c4c4; stroke-width: 3.800; }
.street { stroke: #fff; stroke-width: 2.800; }
.case .wide { stroke-width: 6; }
.street .wide { stroke-width: 4.800; }
.round { fill: #c8e8bc; stroke: #fff; stroke-width: 3; }
.ycase { stroke: #b4b77a; stroke-width: 9; }
.yroad { stroke: #f7fabf; stroke-width: 7.600; }
.ycase .thin { stroke-width: 5; }
.yroad .thin { stroke-width: 3.800; }
.lane { fill: none; stroke: #878971; stroke-width: 1; }
.tram { fill: none; stroke: #777; stroke-width: 1.800; }
.tramloop { fill: none; stroke: #858585; stroke-width: 2; }
.rail-line { fill: none; stroke: #858585; stroke-width: 3; stroke-dasharray: 7 4; opacity: .8; }
.zcase { fill: none; stroke: #c86680; stroke-width: 12; }
.zsd { fill: none; stroke: #e892a2; stroke-width: 10.500; }
.border { fill: none; stroke: #a185a8; stroke-width: 1.800; stroke-dasharray: 11 3; }
.border2, .border3 { fill: none; stroke: #a185a8; stroke-width: 1.300; stroke-dasharray: 14 4 2 4; }
.ferry { fill: none; stroke: #7f91ed; stroke-width: 1.500; stroke-dasharray: 7 8; }
.plot { fill: rgba(0,0,0,.5); stroke: #000; stroke-width: 5.400; }
.lbl { font-family: "Noto Sans", sans-serif; font-size: 13.500px; font-weight: 500; fill: #333; stroke: rgba(255,255,255,.7); stroke-width: 2px; paint-order: stroke; }
.lbl .it { font-style: italic; font-size: 15px; }
.lbl .town { font-size: 15px; fill: #444; }
.lbl .purple { font-style: italic; font-size: 12.500px; fill: #704a70; }
.lbl .wtr { font-style: italic; font-size: 12px; fill: #5289ba; }
.lbl .fer { font-size: 13px; fill: #6673e6; stroke-width: 1px; }
.lbl .road { font-size: 10px; fill: #333; stroke-width: 1px; }
```
